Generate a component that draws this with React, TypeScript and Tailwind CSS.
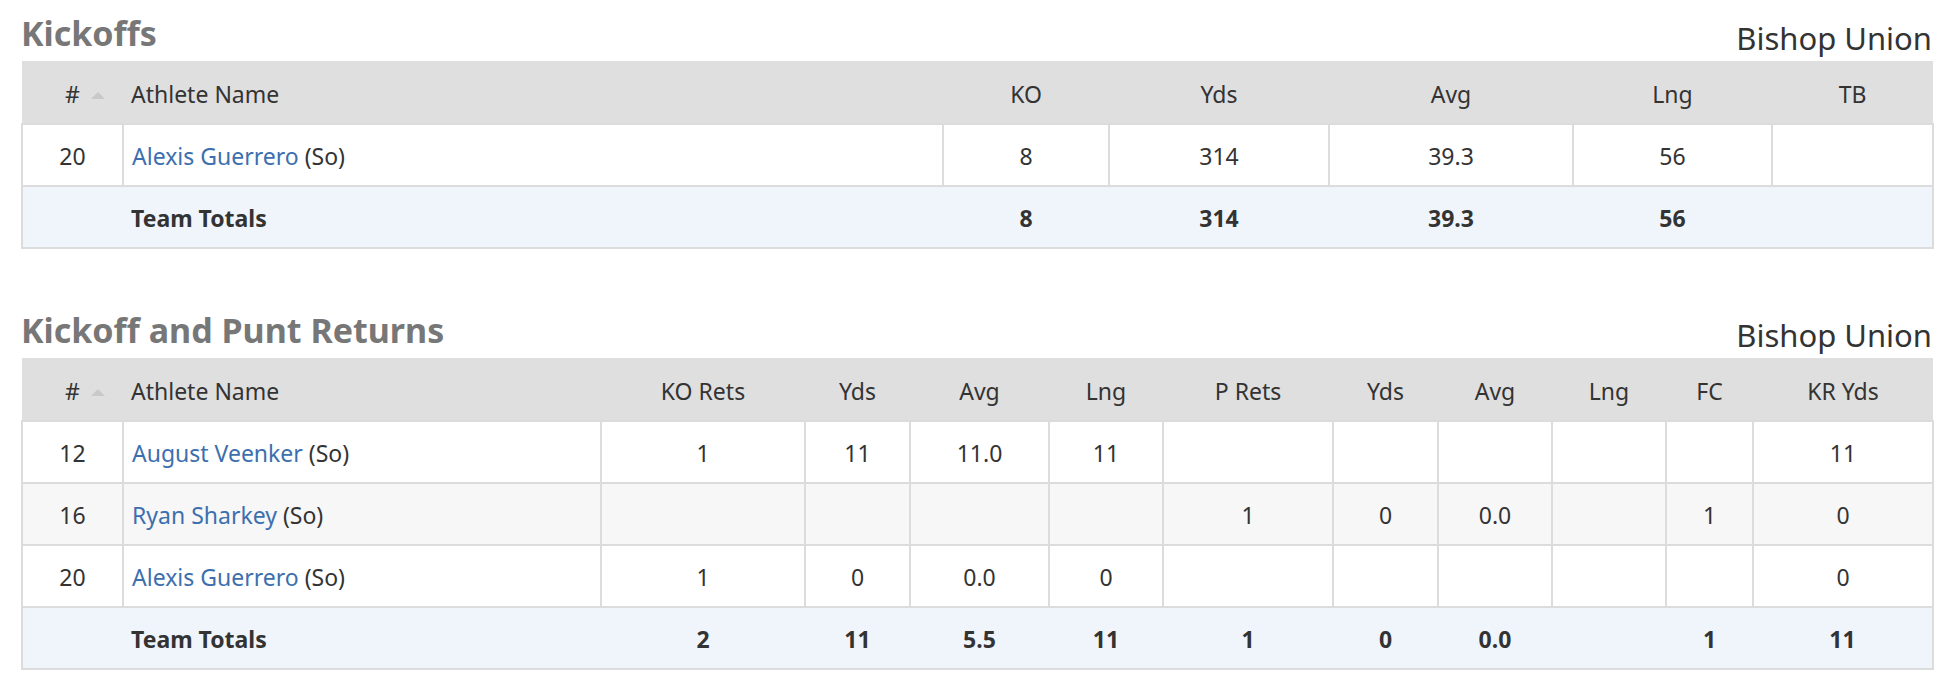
import React from "react";

type Row = { num: string; name: string; year: string; stats: string[] };

interface TableProps {
  title: string;
  school: string;
  columns: string[];
  widths: string[];
  rows: Row[];
  totals: string[];
}

function StatTable({ title, school, columns, widths, rows, totals }: TableProps) {
  return (
    <section>
      {/* Title bar */}
      <div className="flex items-end justify-between mb-[9px]">
        <h2 className="text-[34px] leading-[38px] font-bold text-[#777777]">{title}</h2>
        <span className="text-[31px] leading-[28px] text-[#333333]">{school}</span>
      </div>

      <table className="w-full table-fixed border-collapse text-[23px] text-[#333333]">
        <colgroup>
          {widths.map((w, i) => (
            <col key={i} className={w} />
          ))}
        </colgroup>
        <thead>
          <tr className="bg-[#dfdfdf] h-[63px]">
            <th className="relative font-normal text-center pt-[4px]">
              #
              <span className="absolute left-[69px] top-[31px] w-0 h-0 border-l-[7px] border-r-[7px] border-b-[7px] border-l-transparent border-r-transparent border-b-[#c9c9c9]" />
            </th>
            <th className="font-normal text-left pl-2 pt-[4px]">Athlete Name</th>
            {columns.map((c, i) => (
              <th key={i} className="font-normal text-center pt-[4px]">
                {c}
              </th>
            ))}
          </tr>
        </thead>
        <tbody>
          {rows.map((r, i) => (
            <tr key={i} className={`h-[61.8px] ${i % 2 === 1 ? "bg-[#f7f7f7]" : "bg-white"}`}>
              <td className="border-2 border-[#dcdcdc] text-center pt-[2px]">{r.num}</td>
              <td className="border-2 border-[#dcdcdc] pl-2 pt-[2px]">
                <a href="#" className="text-[#3d6fae]">
                  {r.name}
                </a>{" "}
                ({r.year})
              </td>
              {r.stats.map((s, j) => (
                <td key={j} className="border-2 border-[#dcdcdc] text-center pt-[2px]">
                  {s}
                </td>
              ))}
            </tr>
          ))}
          {/* Team totals */}
          <tr className="h-[62.5px] bg-[#f0f5fc] font-bold border-2 border-[#dcdcdc]">
            <td />
            <td className="pl-2 pt-[2px]">Team Totals</td>
            {totals.map((t, j) => (
              <td key={j} className="text-center pt-[2px]">
                {t}
              </td>
            ))}
          </tr>
        </tbody>
      </table>
    </section>
  );
}

export default function App() {
  return (
    <div
      className="bg-white min-h-screen pl-[21px] pr-[24px] pt-[14px]"
      style={{ fontFamily: '"Noto Sans", "DejaVu Sans", sans-serif' }}
    >
      <StatTable
        title="Kickoffs"
        school="Bishop Union"
        columns={["KO", "Yds", "Avg", "Lng", "TB"]}
        widths={["w-[101px]", "w-[820px]", "w-[166px]", "w-[220px]", "w-[244px]", "w-[199px]", "w-[161px]"]}
        rows={[{ num: "20", name: "Alexis Guerrero", year: "So", stats: ["8", "314", "39.3", "56", ""] }]}
        totals={["8", "314", "39.3", "56", ""]}
      />

      <div className="mt-[62px]">
        <StatTable
          title="Kickoff and Punt Returns"
          school="Bishop Union"
          columns={["KO Rets", "Yds", "Avg", "Lng", "P Rets", "Yds", "Avg", "Lng", "FC", "KR Yds"]}
          widths={[
            "w-[101px]",
            "w-[478px]",
            "w-[204px]",
            "w-[105px]",
            "w-[139px]",
            "w-[114px]",
            "w-[170px]",
            "w-[105px]",
            "w-[114px]",
            "w-[114px]",
            "w-[87px]",
            "w-[180px]",
          ]}
          rows={[
            { num: "12", name: "August Veenker", year: "So", stats: ["1", "11", "11.0", "11", "", "", "", "", "", "11"] },
            { num: "16", name: "Ryan Sharkey", year: "So", stats: ["", "", "", "", "1", "0", "0.0", "", "1", "0"] },
            { num: "20", name: "Alexis Guerrero", year: "So", stats: ["1", "0", "0.0", "0", "", "", "", "", "", "0"] },
          ]}
          totals={["2", "11", "5.5", "11", "1", "0", "0.0", "", "1", "11"]}
        />
      </div>
    </div>
  );
}
